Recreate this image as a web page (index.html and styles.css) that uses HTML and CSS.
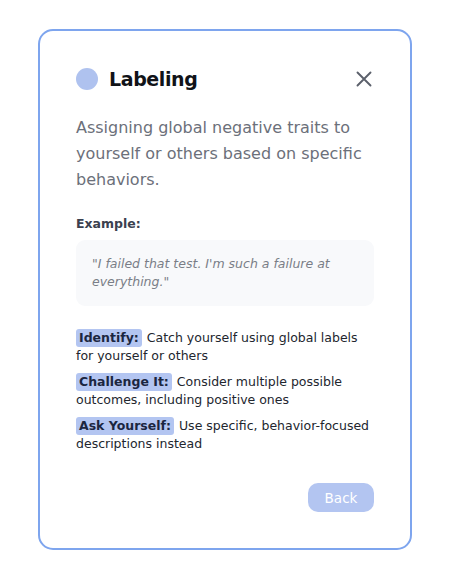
FILE: index.html
```html
<!DOCTYPE html>
<html>
<head>
<meta charset="utf-8">
<link rel="stylesheet" href="styles.css">
</head>
<body>
<div class="card">
  <div class="header">
    <div class="title-wrap">
      <span class="dot"></span>
      <h1 class="title">Labeling</h1>
    </div>
    <button class="close" aria-label="Close">
      <svg width="16" height="16" viewBox="0 0 16 16"><path d="M1.5 1.5 L14.5 14.5 M14.5 1.5 L1.5 14.5" stroke="#5b606b" stroke-width="1.9" stroke-linecap="round" fill="none"/></svg>
    </button>
  </div>
  <p class="desc">Assigning global negative traits to yourself or others based on specific behaviors.</p>
  <div class="example-label">Example:</div>
  <div class="quote">"I failed that test. I'm such a failure at everything."</div>
  <ul class="tips">
    <li><span class="tag">Identify:</span> <span class="tip-text">Catch yourself using global labels for yourself or others</span></li>
    <li><span class="tag">Challenge It:</span> <span class="tip-text">Consider multiple possible outcomes, including positive ones</span></li>
    <li><span class="tag">Ask Yourself:</span> <span class="tip-text">Use specific, behavior-focused descriptions instead</span></li>
  </ul>
  <div class="actions">
    <button class="back">Back</button>
  </div>
</div>
</body>
</html>
```
FILE: styles.css
```css
* { box-sizing: border-box; }
html, body { margin: 0; padding: 0; background: #ffffff; }
body {
  font-family: "DejaVu Sans", "Open Sans", sans-serif;
  padding: 29px 0 0 38px;
}
.card {
  width: 374px;
  height: 521px;
  border: 2px solid #7ea5ee;
  border-radius: 15px;
  padding: 36px 36px 36px 36px;
  display: flex;
  flex-direction: column;
}
.header {
  display: flex;
  align-items: center;
  justify-content: space-between;
  height: 24px;
}
.title-wrap { display: flex; align-items: center; gap: 11px; }
.dot { width: 22px; height: 22px; border-radius: 50%; background: #afc2ef; display: block; }
.title { margin: 0; font-size: 19px; font-weight: 700; color: #111318; letter-spacing: -0.4px; }
.close { border: 0; background: none; padding: 0; margin-right: 2px; width: 16px; height: 16px; display: flex; }
.desc {
  margin: 24px 0 0 0;
  font-size: 16px;
  line-height: 26px;
  color: #6c707a;
}
.example-label {
  margin-top: 23px;
  font-size: 12.5px;
  font-weight: 700;
  color: #3b414f;
}
.quote {
  margin-top: 9px;
  background: #f8f9fb;
  border-radius: 9px;
  padding: 15px 16px 15px 16px;
  font-size: 12.5px;
  line-height: 18px;
  font-style: italic;
  color: #7a7e87;
}
.tips { list-style: none; margin: 23px 0 0 0; padding: 0; display: flex; flex-direction: column; gap: 8px; }
.tips li { font-size: 12.5px; line-height: 18px; color: #22262e; }
.tag {
  display: inline-block;
  background: #b3c5f1; color: #1b2640; font-weight: 700;
  border-radius: 3px; padding: 0 3px; line-height: 18px; margin-right: 1px;
}
.actions { margin-top: auto; display: flex; justify-content: flex-end; }
.back {
  width: 66px; height: 29px;
  border: 0; border-radius: 10px;
  background: #b3c5f1; color: #ffffff;
  font-family: "DejaVu Sans", sans-serif; font-size: 13.5px;
}
```
